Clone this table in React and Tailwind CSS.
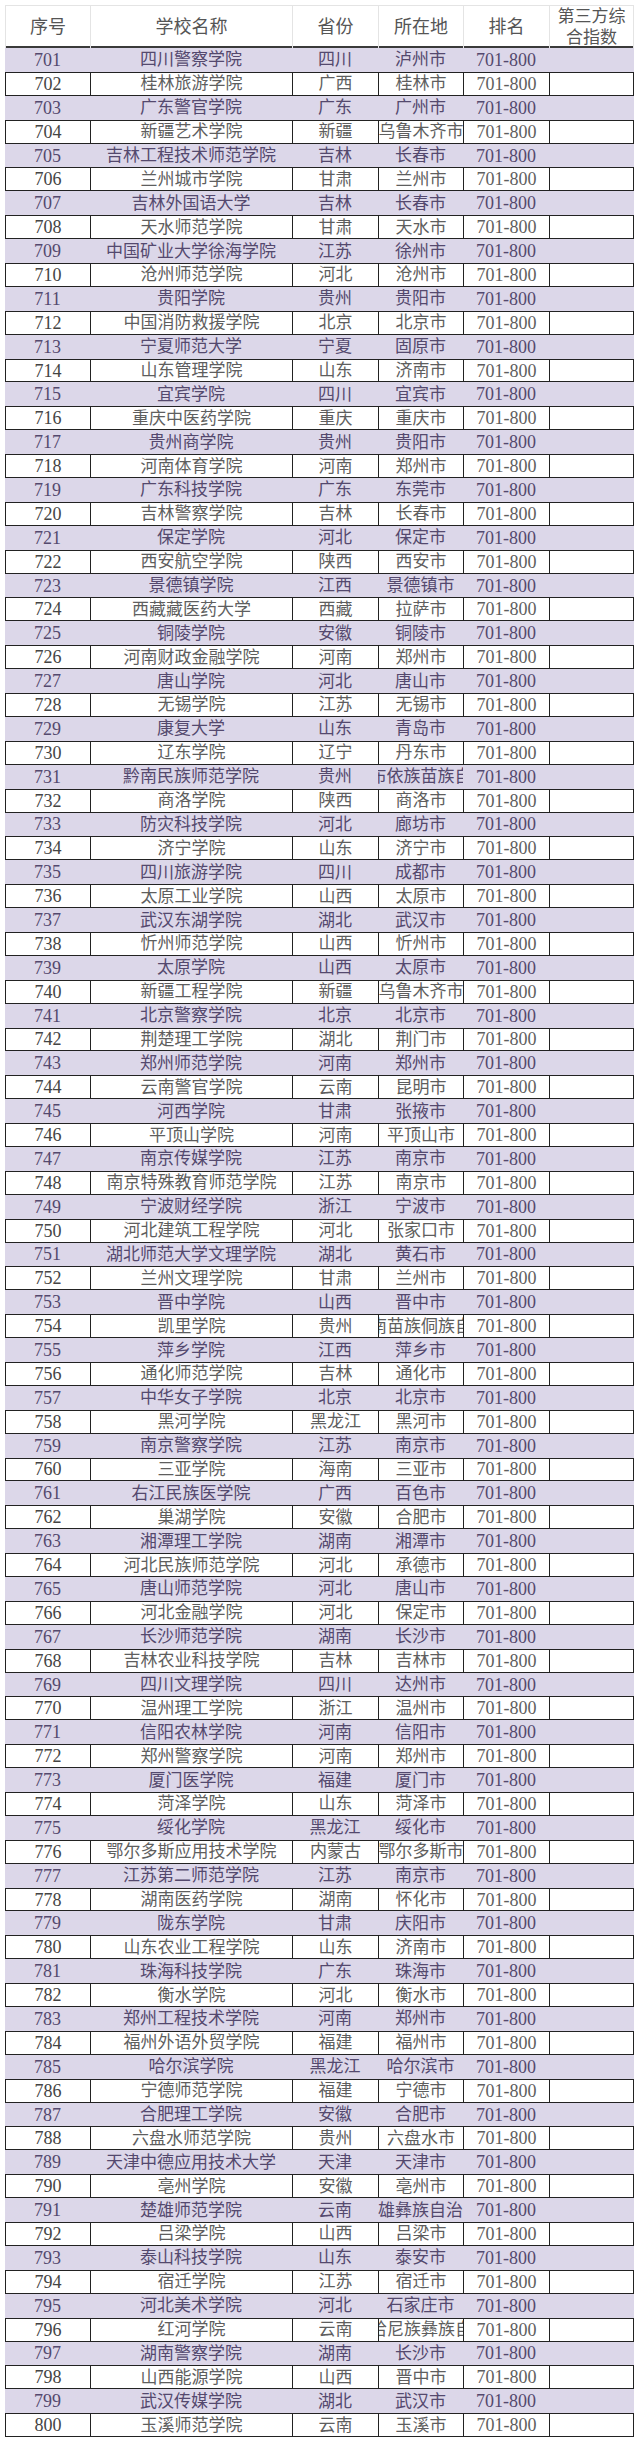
import React from "react";

const rows = [
  ["四川警察学院", "四川", "泸州市"],
  ["桂林旅游学院", "广西", "桂林市"],
  ["广东警官学院", "广东", "广州市"],
  ["新疆艺术学院", "新疆", "乌鲁木齐市"],
  ["吉林工程技术师范学院", "吉林", "长春市"],
  ["兰州城市学院", "甘肃", "兰州市"],
  ["吉林外国语大学", "吉林", "长春市"],
  ["天水师范学院", "甘肃", "天水市"],
  ["中国矿业大学徐海学院", "江苏", "徐州市"],
  ["沧州师范学院", "河北", "沧州市"],
  ["贵阳学院", "贵州", "贵阳市"],
  ["中国消防救援学院", "北京", "北京市"],
  ["宁夏师范大学", "宁夏", "固原市"],
  ["山东管理学院", "山东", "济南市"],
  ["宜宾学院", "四川", "宜宾市"],
  ["重庆中医药学院", "重庆", "重庆市"],
  ["贵州商学院", "贵州", "贵阳市"],
  ["河南体育学院", "河南", "郑州市"],
  ["广东科技学院", "广东", "东莞市"],
  ["吉林警察学院", "吉林", "长春市"],
  ["保定学院", "河北", "保定市"],
  ["西安航空学院", "陕西", "西安市"],
  ["景德镇学院", "江西", "景德镇市"],
  ["西藏藏医药大学", "西藏", "拉萨市"],
  ["铜陵学院", "安徽", "铜陵市"],
  ["河南财政金融学院", "河南", "郑州市"],
  ["唐山学院", "河北", "唐山市"],
  ["无锡学院", "江苏", "无锡市"],
  ["康复大学", "山东", "青岛市"],
  ["辽东学院", "辽宁", "丹东市"],
  ["黔南民族师范学院", "贵州", "黔南布依族苗族自治州"],
  ["商洛学院", "陕西", "商洛市"],
  ["防灾科技学院", "河北", "廊坊市"],
  ["济宁学院", "山东", "济宁市"],
  ["四川旅游学院", "四川", "成都市"],
  ["太原工业学院", "山西", "太原市"],
  ["武汉东湖学院", "湖北", "武汉市"],
  ["忻州师范学院", "山西", "忻州市"],
  ["太原学院", "山西", "太原市"],
  ["新疆工程学院", "新疆", "乌鲁木齐市"],
  ["北京警察学院", "北京", "北京市"],
  ["荆楚理工学院", "湖北", "荆门市"],
  ["郑州师范学院", "河南", "郑州市"],
  ["云南警官学院", "云南", "昆明市"],
  ["河西学院", "甘肃", "张掖市"],
  ["平顶山学院", "河南", "平顶山市"],
  ["南京传媒学院", "江苏", "南京市"],
  ["南京特殊教育师范学院", "江苏", "南京市"],
  ["宁波财经学院", "浙江", "宁波市"],
  ["河北建筑工程学院", "河北", "张家口市"],
  ["湖北师范大学文理学院", "湖北", "黄石市"],
  ["兰州文理学院", "甘肃", "兰州市"],
  ["晋中学院", "山西", "晋中市"],
  ["凯里学院", "贵州", "黔东南苗族侗族自治州"],
  ["萍乡学院", "江西", "萍乡市"],
  ["通化师范学院", "吉林", "通化市"],
  ["中华女子学院", "北京", "北京市"],
  ["黑河学院", "黑龙江", "黑河市"],
  ["南京警察学院", "江苏", "南京市"],
  ["三亚学院", "海南", "三亚市"],
  ["右江民族医学院", "广西", "百色市"],
  ["巢湖学院", "安徽", "合肥市"],
  ["湘潭理工学院", "湖南", "湘潭市"],
  ["河北民族师范学院", "河北", "承德市"],
  ["唐山师范学院", "河北", "唐山市"],
  ["河北金融学院", "河北", "保定市"],
  ["长沙师范学院", "湖南", "长沙市"],
  ["吉林农业科技学院", "吉林", "吉林市"],
  ["四川文理学院", "四川", "达州市"],
  ["温州理工学院", "浙江", "温州市"],
  ["信阳农林学院", "河南", "信阳市"],
  ["郑州警察学院", "河南", "郑州市"],
  ["厦门医学院", "福建", "厦门市"],
  ["菏泽学院", "山东", "菏泽市"],
  ["绥化学院", "黑龙江", "绥化市"],
  ["鄂尔多斯应用技术学院", "内蒙古", "鄂尔多斯市"],
  ["江苏第二师范学院", "江苏", "南京市"],
  ["湖南医药学院", "湖南", "怀化市"],
  ["陇东学院", "甘肃", "庆阳市"],
  ["山东农业工程学院", "山东", "济南市"],
  ["珠海科技学院", "广东", "珠海市"],
  ["衡水学院", "河北", "衡水市"],
  ["郑州工程技术学院", "河南", "郑州市"],
  ["福州外语外贸学院", "福建", "福州市"],
  ["哈尔滨学院", "黑龙江", "哈尔滨市"],
  ["宁德师范学院", "福建", "宁德市"],
  ["合肥理工学院", "安徽", "合肥市"],
  ["六盘水师范学院", "贵州", "六盘水市"],
  ["天津中德应用技术大学", "天津", "天津市"],
  ["亳州学院", "安徽", "亳州市"],
  ["楚雄师范学院", "云南", "楚雄彝族自治州"],
  ["吕梁学院", "山西", "吕梁市"],
  ["泰山科技学院", "山东", "泰安市"],
  ["宿迁学院", "江苏", "宿迁市"],
  ["河北美术学院", "河北", "石家庄市"],
  ["红河学院", "云南", "红河哈尼族彝族自治州"],
  ["湖南警察学院", "湖南", "长沙市"],
  ["山西能源学院", "山西", "晋中市"],
  ["武汉传媒学院", "湖北", "武汉市"],
  ["玉溪师范学院", "云南", "玉溪市"],
];

const cols = "grid grid-cols-[85px_202px_86px_85px_86px_85px]";
const cell =
  "flex items-center justify-center overflow-hidden whitespace-nowrap";

function Row({ i, r }) {
  const purple = i % 2 === 0;
  const vals = [String(701 + i), r[0], r[1], r[2], "701-800", ""];
  const size = (k) => (k === 0 || k === 4 ? "text-[18px]" : "text-[17px]");
  if (purple) {
    return (
      <div className={`${cols} h-[23.9px] bg-[#dcd7e9] text-[#54496e]`}>
        {vals.map((v, k) => (
          <div key={k} className={`${cell} ${size(k)}`}>
            {v}
          </div>
        ))}
      </div>
    );
  }
  return (
    <div
      className={`${cols} h-[23.9px] bg-white text-[#5e5e5e] border-y-[1.5px] border-[#222]`}
    >
      {vals.map((v, k) => (
        <div
          key={k}
          className={`${cell} ${size(k)} border-l-[1.5px] border-[#222] ${
            k === 5 ? "border-r-[1.5px]" : ""
          } ${k === 0 ? "text-[#444]" : ""}`}
        >
          {v}
        </div>
      ))}
    </div>
  );
}

export default function App() {
  const headers = ["序号", "学校名称", "省份", "所在地", "排名"];
  return (
    <div className="bg-white min-h-[2445px] pl-[5px] pt-[5px] font-['Liberation_Serif','Noto_Sans_CJK_SC',serif] text-[17px] leading-none">
      <div className="w-[629px]">
        <div
          className={`${cols} h-[43px] border-t border-[#e4e4e4] border-b-2 border-b-[#3a3a3a] text-[#555]`}
        >
          {headers.map((h, k) => (
            <div
              key={k}
              className={`${cell} border-l border-[#e4e4e4] text-[18px]`}
            >
              {h}
            </div>
          ))}
          <div className="flex flex-col items-center justify-center border-x border-[#e4e4e4] text-[17px] leading-[21px]">
            <span>第三方综</span>
            <span>合指数</span>
          </div>
        </div>
        {rows.map((r, i) => (
          <Row key={i} i={i} r={r} />
        ))}
      </div>
    </div>
  );
}
